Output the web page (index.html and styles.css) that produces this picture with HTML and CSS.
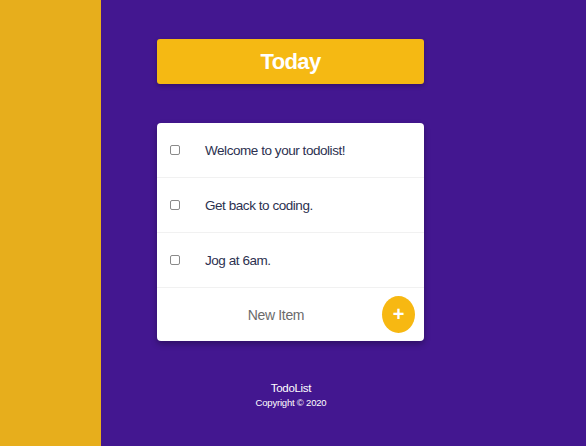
FILE: index.html
```html
<!DOCTYPE html>
<html>
<head>
<meta charset="utf-8">
<link rel="stylesheet" href="styles.css">
</head>
<body>
<div class="page">
  <div class="side"></div>
  <main class="main">
    <div class="heading"><h1>Today</h1></div>
    <div class="card">
      <div class="item"><span class="check"></span><span class="label">Welcome to your todolist!</span></div>
      <div class="item"><span class="check"></span><span class="label">Get back to coding.</span></div>
      <div class="item"><span class="check"></span><span class="label">Jog at 6am.</span></div>
      <div class="new">
        <span class="new-label">New Item</span>
        <button class="add">+</button>
      </div>
    </div>
    <footer class="footer">
      <div class="brand">TodoList</div>
      <div class="copy">Copyright © 2020</div>
    </footer>
  </main>
</div>
</body>
</html>
```
FILE: styles.css
```css
html, body { margin: 0; padding: 0; height: 100%; }
body {
  font-family: "Liberation Sans", Arial, sans-serif;
  background: #431790;
}
.page { display: flex; height: 446px; }
.side { width: 101px; background: #E7AE1C; flex: none; }
.main {
  flex: 1;
  display: flex;
  flex-direction: column;
  padding-left: 56px;
  padding-top: 39px;
}
.heading {
  width: 267px;
  height: 45px;
  background: #F5B913;
  border-radius: 3px;
  box-shadow: 0 2px 4px rgba(0,0,0,0.25);
  display: flex;
  align-items: center;
  justify-content: center;
}
.heading h1 {
  margin: 0;
  color: #fff;
  font-size: 22px;
  font-weight: bold;
  letter-spacing: -0.6px;
}
.card {
  margin-top: 39px;
  width: 267px;
  background: #fff;
  border-radius: 4px;
  box-shadow: 0 3px 6px rgba(0,0,0,0.3);
}
.item {
  height: 55px;
  display: flex;
  align-items: center;
  border-bottom: 1px solid #f1f1f1;
  box-sizing: border-box;
}
.check {
  width: 8px;
  height: 8px;
  border: 1px solid #8a8a8a;
  border-radius: 2px;
  margin-left: 13px;
  margin-right: 25px;
  background: #fff;
}
.label {
  font-size: 13.5px;
  color: #2c3150;
  letter-spacing: -0.45px;
}
.new {
  height: 53px;
  display: flex;
  align-items: center;
  position: relative;
}
.new-label {
  width: 238px;
  text-align: center;
  font-size: 14px;
  color: #6b6b6b;
  letter-spacing: -0.35px;
}
.add {
  position: absolute;
  right: 9px;
  top: 8px;
  width: 33px;
  height: 37px;
  border-radius: 50%;
  border: none;
  background: #F7B812;
  color: #fff;
  font-family: "Liberation Sans", Arial, sans-serif;
  font-size: 20px;
  font-weight: bold;
  padding: 0;
  line-height: 37px;
}
.footer {
  margin-top: 40px;
  width: 268px;
  text-align: center;
  color: #fff;
}
.brand { font-size: 11.5px; line-height: 14px; letter-spacing: -0.3px; }
.copy { font-size: 9.5px; line-height: 16px; letter-spacing: -0.2px; }
```
